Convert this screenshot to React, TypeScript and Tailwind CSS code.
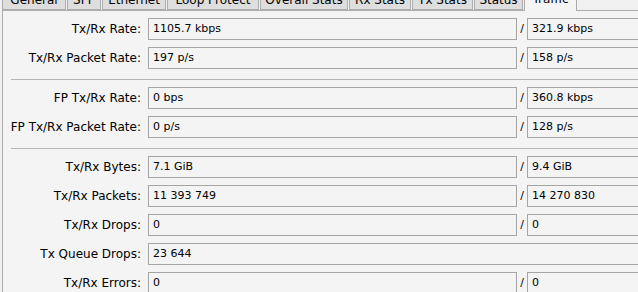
import React from "react";

const tabs = [
  { name: "General", w: "w-[64px]" },
  { name: "SFP", w: "w-[34px]" },
  { name: "Ethernet", w: "w-[64px]" },
  { name: "Loop Protect", w: "w-[92px]" },
  { name: "Overall Stats", w: "w-[88px]" },
  { name: "Rx Stats", w: "w-[62px]" },
  { name: "Tx Stats", w: "w-[61px]" },
  { name: "Status", w: "w-[49px]" },
  { name: "Traffic", w: "w-[53px]", active: true },
];

type Row = { label: string; tx: string; rx?: string };

const Field = ({ value, wide }: { value: string; wide?: boolean }) => (
  <div
    className={
      wide
        ? "col-span-3 h-[22px] border border-[#a5a5a5] bg-[#f4f4f4] pl-[4px] flex items-center whitespace-nowrap overflow-hidden"
        : "h-[22px] border border-[#a5a5a5] bg-[#f4f4f4] pl-[4px] flex items-center whitespace-nowrap overflow-hidden"
    }
  >
    {value}
  </div>
);

const Rows = ({ rows }: { rows: Row[] }) => (
  <div className="grid grid-cols-[145px_369px_10px_160px] gap-y-[7px] items-center">
    {rows.map((r) => (
      <React.Fragment key={r.label}>
        <div className="pr-[7px] text-right whitespace-nowrap text-[12px]">{r.label}</div>
        {r.rx === undefined ? (
          <Field value={r.tx} wide />
        ) : (
          <>
            <Field value={r.tx} />
            <div className="text-center">/</div>
            <Field value={r.rx} />
          </>
        )}
      </React.Fragment>
    ))}
  </div>
);

const Separator = () => <div className="ml-[8px] mt-[10px] mb-[7px] h-px bg-[#b4b4b4]" />;

export default function App() {
  return (
    <div className="w-[638px] h-[292px] overflow-hidden bg-[#f0f0f0] text-[11px] text-black font-['DejaVu_Sans',sans-serif]">
      {/* tabs, cut at the top */}
      <div className="flex gap-px pl-[2px] -mt-[11px] h-[21px] items-end text-[12px]">
        {tabs.map((t) =>
          t.active ? (
            <div
              key={t.name}
              className={`${t.w} shrink-0 h-[23px] -mb-px relative z-10 border border-b-0 border-[#adadad] bg-[#f4f4f4] flex items-center justify-center pb-[2px]`}
            >
              {t.name}
            </div>
          ) : (
            <div
              key={t.name}
              className={`${t.w} shrink-0 h-[21px] border border-[#adadad] bg-[#dedede] flex items-center justify-center`}
            >
              {t.name}
            </div>
          )
        )}
      </div>

      {/* panel */}
      <div className="ml-[2px] border-t border-l border-[#adadad] bg-[#f4f4f4] h-[300px] pt-[7px]">
        <Rows
          rows={[
            { label: "Tx/Rx Rate:", tx: "1105.7 kbps", rx: "321.9 kbps" },
            { label: "Tx/Rx Packet Rate:", tx: "197 p/s", rx: "158 p/s" },
          ]}
        />
        <Separator />
        <Rows
          rows={[
            { label: "FP Tx/Rx Rate:", tx: "0 bps", rx: "360.8 kbps" },
            { label: "FP Tx/Rx Packet Rate:", tx: "0 p/s", rx: "128 p/s" },
          ]}
        />
        <Separator />
        <Rows
          rows={[
            { label: "Tx/Rx Bytes:", tx: "7.1 GiB", rx: "9.4 GiB" },
            { label: "Tx/Rx Packets:", tx: "11 393 749", rx: "14 270 830" },
            { label: "Tx/Rx Drops:", tx: "0", rx: "0" },
            { label: "Tx Queue Drops:", tx: "23 644" },
            { label: "Tx/Rx Errors:", tx: "0", rx: "0" },
          ]}
        />
      </div>
    </div>
  );
}
